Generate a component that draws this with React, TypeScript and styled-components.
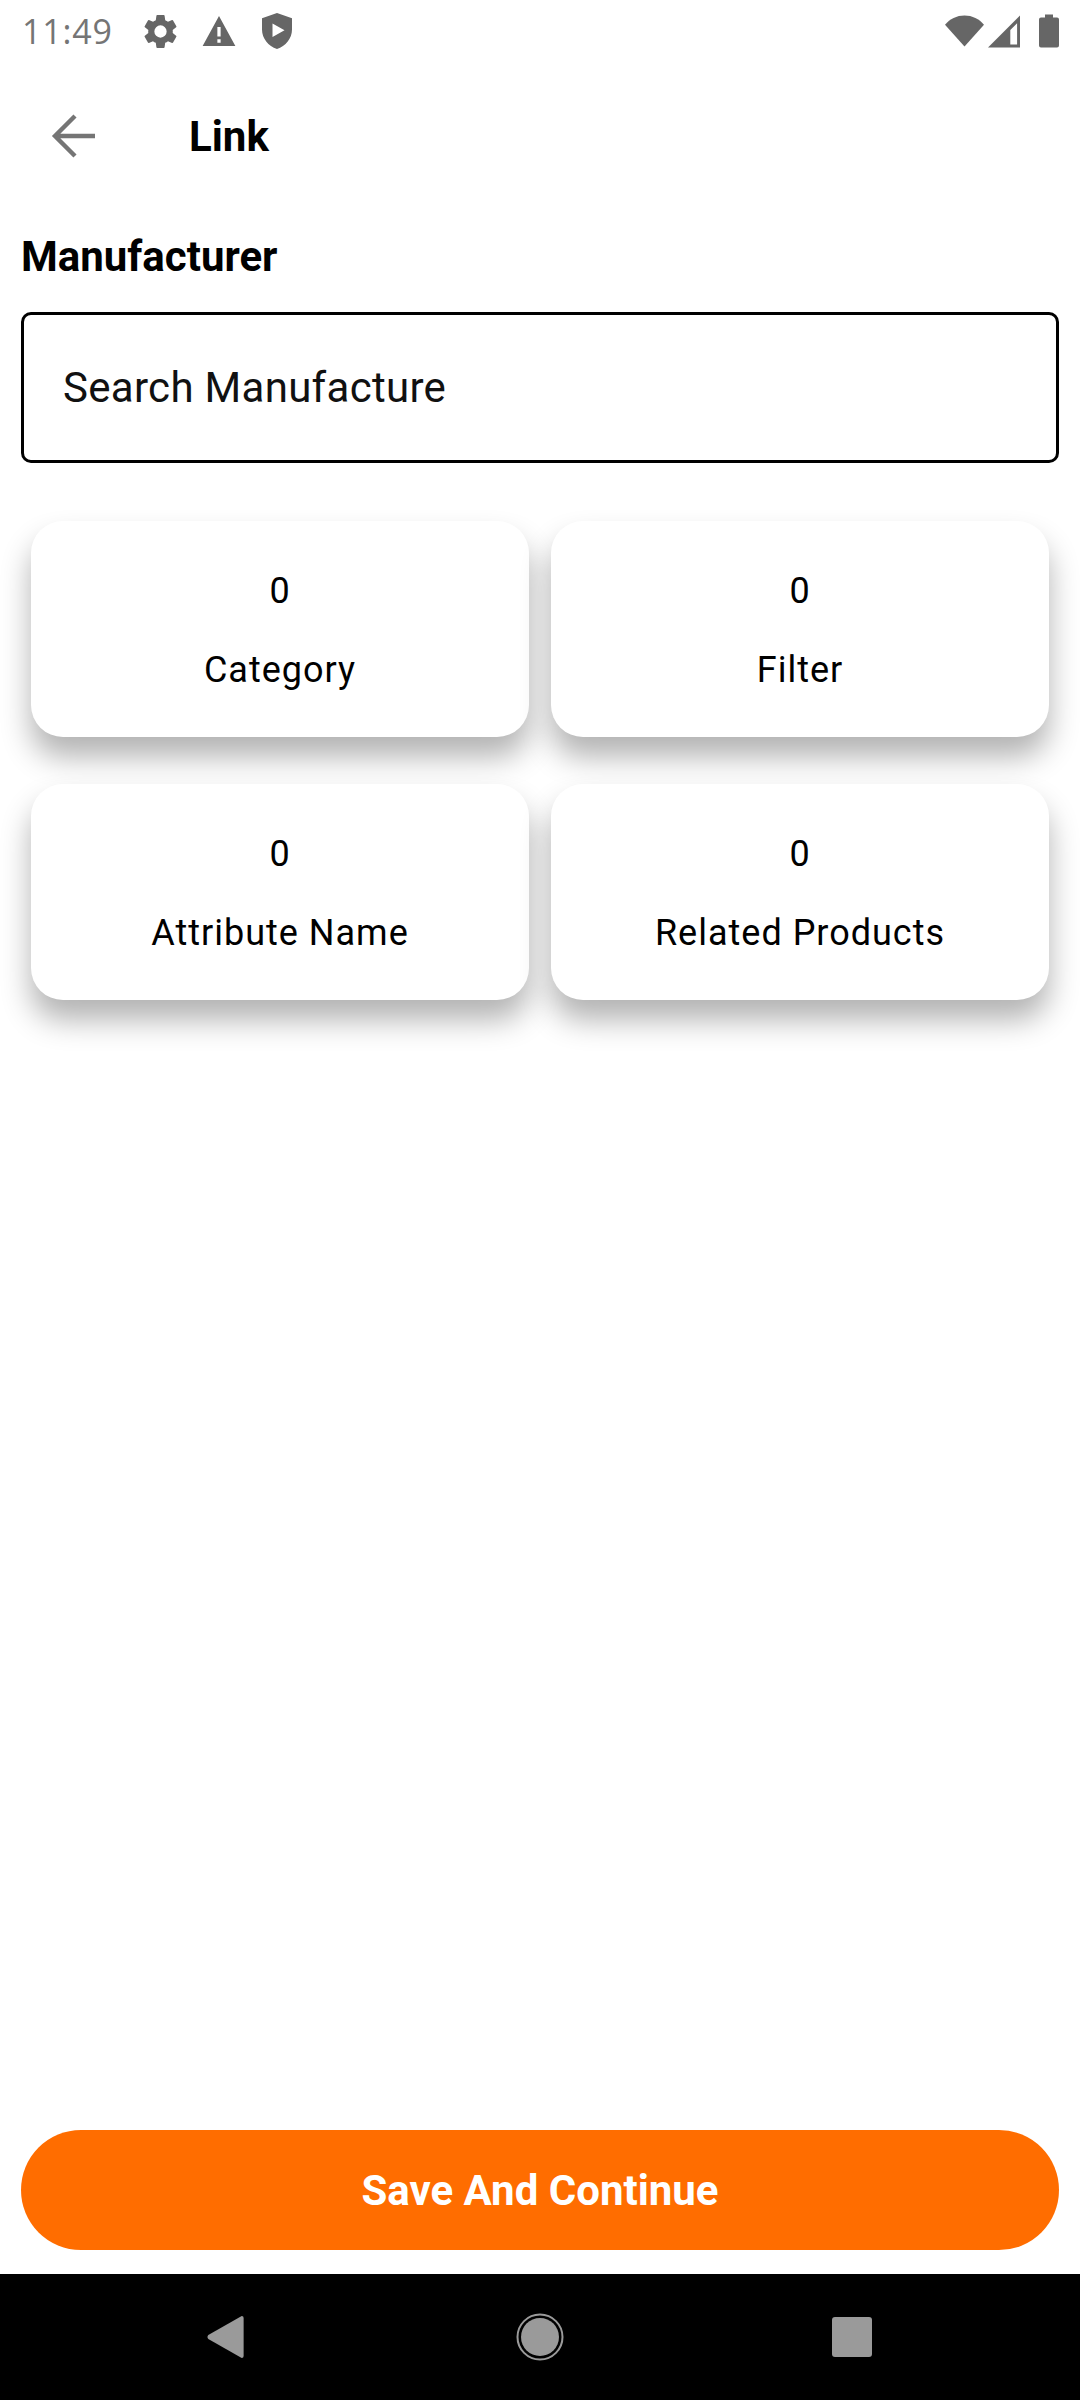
import React from "react";
import styled, { createGlobalStyle } from "styled-components";

const GlobalStyle = createGlobalStyle`
  html, body {
    margin: 0;
    padding: 0;
    background: #fff;
    font-family: Roboto, "Liberation Sans", sans-serif;
  }
`;

const Screen = styled.div`
  width: 1080px;
  height: 2400px;
  display: flex;
  flex-direction: column;
  background: #fff;
  overflow: hidden;
`;

const StatusBar = styled.div`
  height: 62px;
  padding: 0 21px 0 22px;
  display: flex;
  align-items: center;
  justify-content: space-between;
  box-sizing: border-box;
`;

const StatusGroup = styled.div`
  display: flex;
  align-items: center;
`;

const Clock = styled.span`
  font-family: "Open Sans", Roboto, sans-serif;
  font-size: 34px;
  color: #757575;
  width: 91px;
  margin-right: 27px;
  letter-spacing: 0.8px;
`;

const StatusIcon = styled.svg<{ $gap?: number }>`
  display: block;
  fill: #666;
  margin-right: ${(p) => p.$gap ?? 0}px;
`;

const Header = styled.div`
  height: 100px;
  margin-top: 24px;
  display: flex;
  align-items: center;
  padding-left: 51px;
`;

const BackIcon = styled.svg`
  display: block;
  width: 46px;
  height: 46px;
  stroke: #757575;
  fill: none;
  stroke-width: 4.4;
  margin-right: 92px;
`;

const Title = styled.h1`
  margin: 0;
  font-size: 42px;
  font-weight: 700;
  color: #000;
`;

const Section = styled.div`
  padding: 0 21px;
`;

const SectionLabel = styled.div`
  margin-top: 46px;
  font-size: 42px;
  line-height: 50px;
  font-weight: 700;
  color: #000;
`;

const SearchBox = styled.div`
  margin-top: 30px;
  height: 151px;
  box-sizing: border-box;
  border: 3px solid #000;
  border-radius: 10px;
  padding-left: 39px;
  display: flex;
  align-items: center;
  font-size: 42px;
  color: #111;
  letter-spacing: 0.3px;
`;

const CardGrid = styled.div`
  margin-top: 58px;
  padding: 0 31px;
  display: grid;
  grid-template-columns: 498px 498px;
  column-gap: 22px;
  row-gap: 47px;
`;

const Card = styled.div`
  height: 216px;
  border-radius: 32px;
  background: #fff;
  box-shadow: 0 20px 30px rgba(0, 0, 0, 0.3);
  display: flex;
  flex-direction: column;
  align-items: center;
  color: #000;
  font-size: 36px;
  letter-spacing: 1px;
`;

const CardValue = styled.div`
  margin-top: 48px;
  line-height: 44px;
`;

const CardLabel = styled.div`
  margin-top: 35px;
  line-height: 44px;
`;

const Spacer = styled.div`
  flex: 1;
`;

const SaveButton = styled.button`
  display: block;
  width: 1038px;
  height: 120px;
  margin: 0 21px 24px;
  border: 0;
  border-radius: 60px;
  background: #ff6d00;
  color: #fff;
  font-family: inherit;
  font-size: 42px;
  font-weight: 700;
`;

const NavBar = styled.div`
  height: 126px;
  background: #000;
  display: flex;
  align-items: center;
  padding-left: 207px;
`;

const NavIcon = styled.svg<{ $gap?: number }>`
  display: block;
  fill: #9a9a9a;
  margin-right: ${(p) => p.$gap ?? 0}px;
`;

const cards = [
  { value: 0, label: "Category" },
  { value: 0, label: "Filter" },
  { value: 0, label: "Attribute Name" },
  { value: 0, label: "Related Products" },
];

export default function App() {
  return (
    <Screen>
      <GlobalStyle />
      <StatusBar>
        <StatusGroup>
          <Clock>11:49</Clock>
          <StatusIcon $gap={21} width="41" height="41" viewBox="0 0 24 24">
            <path d="M19.14 12.94c.04-.3.06-.61.06-.94 0-.32-.02-.64-.07-.94l2.03-1.58a.49.49 0 0 0 .12-.61l-1.92-3.32a.49.49 0 0 0-.59-.22l-2.39.96a7 7 0 0 0-1.62-.94l-.36-2.54a.48.48 0 0 0-.48-.41h-3.84a.47.47 0 0 0-.47.41l-.36 2.54c-.59.24-1.13.57-1.62.94l-2.39-.96a.48.48 0 0 0-.59.22L2.74 8.87a.47.47 0 0 0 .12.61l2.03 1.58c-.05.3-.09.63-.09.94s.02.64.07.94l-2.03 1.58a.49.49 0 0 0-.12.61l1.92 3.32c.12.22.37.29.59.22l2.39-.96c.5.38 1.03.7 1.62.94l.36 2.54c.05.24.24.41.48.41h3.84c.24 0 .44-.17.47-.41l.36-2.54c.59-.24 1.13-.56 1.62-.94l2.39.96c.22.08.47 0 .59-.22l1.92-3.32a.47.47 0 0 0-.12-.61l-2.01-1.58zM12 15.6A3.6 3.6 0 1 1 12 8.4a3.6 3.6 0 0 1 0 7.2z" />
          </StatusIcon>
          <StatusIcon $gap={26} width="34" height="30" viewBox="0 0 24 22">
            <path fillRule="evenodd" d="M12 0 24 22H0L12 0zm-1.200 8v7h2.400V8h-2.400zm0 9v2.600h2.400V17h-2.400z" />
          </StatusIcon>
          <StatusIcon width="30" height="36" viewBox="0 0 20 24">
            <path fillRule="evenodd" d="M10 0 20 3.500V11c0 6-4.200 11-10 13C4.200 22 0 17 0 11V3.500L10 0zM7 7v9l8-4.500L7 7z" />
          </StatusIcon>
        </StatusGroup>
        <StatusGroup>
          <StatusIcon $gap={4} width="39" height="32" viewBox="0 0 40 32">
            <path d="M0 9.500C5 3.500 12 0 20 0s15 3.500 20 9.500L20 32 0 9.500z" />
          </StatusIcon>
          <StatusIcon $gap={19} width="32" height="33" viewBox="0 0 33 33">
            <path fillRule="evenodd" d="M33 0v33H0L33 0zm-3 8-7 7v15h7V8z" />
          </StatusIcon>
          <StatusIcon width="20" height="34" viewBox="0 0 20 33">
            <path d="M6 0h8v3h4a2 2 0 0 1 2 2v26a2 2 0 0 1-2 2H2a2 2 0 0 1-2-2V5a2 2 0 0 1 2-2h4V0z" />
          </StatusIcon>
        </StatusGroup>
      </StatusBar>
      <Header>
        <BackIcon viewBox="0 0 46 46">
          <path d="M44 23H5M24 3 4 23l20 20" />
        </BackIcon>
        <Title>Link</Title>
      </Header>
      <Section>
        <SectionLabel>Manufacturer</SectionLabel>
        <SearchBox>Search Manufacture</SearchBox>
      </Section>
      <CardGrid>
        {cards.map((card) => (
          <Card key={card.label}>
            <CardValue>{card.value}</CardValue>
            <CardLabel>{card.label}</CardLabel>
          </Card>
        ))}
      </CardGrid>
      <Spacer />
      <SaveButton>Save And Continue</SaveButton>
      <NavBar>
        <NavIcon $gap={272} width="37" height="42" viewBox="0 0 38 44">
          <path d="M36 0a2 2 0 0 1 2 2v40a2 2 0 0 1-2 2L1 24a3 3 0 0 1 0-4L36 0z" />
        </NavIcon>
        <NavIcon $gap={268} width="48" height="48" viewBox="0 0 48 48">
          <circle cx="24" cy="24" r="19" />
          <circle cx="24" cy="24" r="22.500" fill="none" stroke="#9a9a9a" strokeWidth="2" />
        </NavIcon>
        <NavIcon width="40" height="40" viewBox="0 0 40 40">
          <rect width="40" height="40" rx="3" />
        </NavIcon>
      </NavBar>
    </Screen>
  );
}
